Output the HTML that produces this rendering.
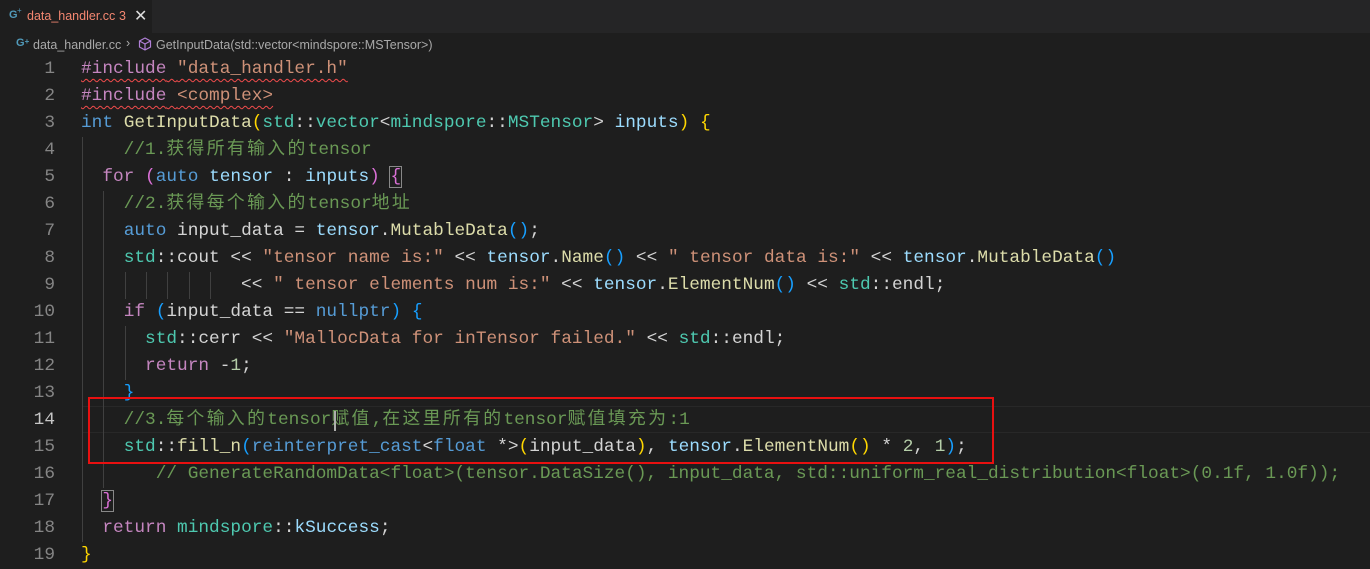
<!DOCTYPE html>
<html><head><meta charset="utf-8"><style>
body{margin:0;width:1370px;height:559px;background:#1e1e1e;overflow:hidden;position:relative;font-family:"Liberation Sans","Noto Sans CJK SC",sans-serif}
.tabs{position:absolute;left:0;top:0;width:1370px;height:33px;background:#252526}
.tab{position:absolute;left:0;top:0;width:152px;height:33px;background:#1e1e1e}
.crumb{position:absolute;left:0;top:33px;height:22px;width:1370px;color:#a9a9a9;font-size:12.5px}
.code{position:absolute;left:0;top:2px;width:1370px;height:559px;font-family:"Liberation Mono","Noto Sans CJK SC",monospace;font-size:17.8px}
.ln{position:absolute;left:0;width:55px;text-align:right;color:#858585;height:27px;line-height:27px}
.l{position:absolute;left:81px;height:27px;line-height:27px;white-space:pre;color:#d4d4d4}
.g{position:absolute;width:1px;background:#404040;height:27px}
.k{color:#c586c0}.s{color:#ce9178}.t{color:#569cd6}.f{color:#dcdcaa}.n{color:#4ec9b0}.v{color:#9cdcfe}.c{color:#6a9955}.y{color:#ffd700}.o{color:#da70d6}.b{color:#179fff}.nu{color:#b5cea8}
.cj{letter-spacing:2.4px}
.sq{text-decoration:underline wavy #f14c4c;text-underline-offset:5px;text-decoration-thickness:1px}
</style></head><body>
<div class="tabs"><div class="tab">
<span style="position:absolute;left:9px;top:9px;color:#519aba;font-size:11px;font-weight:bold">G</span><span style="position:absolute;left:17px;top:6px;color:#519aba;font-size:8px">+</span>
<span style="position:absolute;left:27px;top:9px;color:#f48771;font-size:12.5px">data_handler.cc</span>
<span style="position:absolute;left:119px;top:9px;color:#f48771;font-size:12.5px">3</span>
<span style="position:absolute;left:134px;top:6px;color:#ddd;font-size:16px">✕</span>
</div></div>
<div class="crumb">
<span style="position:absolute;left:16px;top:4px;color:#519aba;font-size:11px;font-weight:bold">G<span style="font-size:8px;vertical-align:top">+</span></span>
<span style="position:absolute;left:33px;top:5px">data_handler.cc</span>
<span style="position:absolute;left:126px;top:3px">›</span>
<svg style="position:absolute;left:138px;top:4px" width="14" height="14" viewBox="0 0 14 14"><path d="M7 1L12.5 4V10L7 13L1.5 10V4Z M1.5 4L7 7L12.5 4 M7 7V13" fill="none" stroke="#b180d7" stroke-width="1.2"/></svg>
<span style="position:absolute;left:156px;top:5px">GetInputData(std::vector&lt;mindspore::MSTensor&gt;)</span>
</div>
<div class="code">
<div style="position:absolute;left:82px;top:404px;width:1288px;height:25px;border:1px solid #282828;border-left:none;border-right:none"></div>
<div class="g" style="left:82px;top:135px;height:405px"></div>
<div class="g" style="left:103px;top:189px;height:216px"></div>
<div class="g" style="left:103px;top:405px;height:81px"></div>
<div class="g" style="left:125px;top:270px"></div><div class="g" style="left:146px;top:270px"></div><div class="g" style="left:167px;top:270px"></div><div class="g" style="left:189px;top:270px"></div><div class="g" style="left:210px;top:270px"></div>
<div class="g" style="left:125px;top:324px;height:54px"></div>

<div class="ln" style="top:54px">1</div><div class="l" style="top:54px"><span class="sq"><span class="k">#include</span> <span class="s">"data_handler.h"</span></span></div>
<div class="ln" style="top:81px">2</div><div class="l" style="top:81px"><span class="sq"><span class="k">#include</span> <span class="s">&lt;complex&gt;</span></span></div>
<div class="ln" style="top:108px">3</div><div class="l" style="top:108px"><span class="t">int</span> <span class="f">GetInputData</span><span class="y">(</span><span class="n">std</span>::<span class="n">vector</span>&lt;<span class="n">mindspore</span>::<span class="n">MSTensor</span>&gt; <span class="v">inputs</span><span class="y">)</span> <span class="y">{</span></div>
<div class="ln" style="top:135px">4</div><div class="l" style="top:135px"><span class="c">    //1.<span class="cj">获得所有输入的</span>tensor</span></div>
<div class="ln" style="top:162px">5</div><div class="l" style="top:162px">  <span class="k">for</span> <span class="o">(</span><span class="t">auto</span> <span class="v">tensor</span> : <span class="v">inputs</span><span class="o">)</span> <span class="o" style="outline:1px solid #888">{</span></div>
<div class="ln" style="top:189px">6</div><div class="l" style="top:189px"><span class="c">    //2.<span class="cj">获得每个输入的</span>tensor<span class="cj">地址</span></span></div>
<div class="ln" style="top:216px">7</div><div class="l" style="top:216px">    <span class="t">auto</span> input_data = <span class="v">tensor</span>.<span class="f">MutableData</span><span class="b">()</span>;</div>
<div class="ln" style="top:243px">8</div><div class="l" style="top:243px">    <span class="n">std</span>::cout &lt;&lt; <span class="s">"tensor name is:"</span> &lt;&lt; <span class="v">tensor</span>.<span class="f">Name</span><span class="b">()</span> &lt;&lt; <span class="s">" tensor data is:"</span> &lt;&lt; <span class="v">tensor</span>.<span class="f">MutableData</span><span class="b">()</span></div>
<div class="ln" style="top:270px">9</div><div class="l" style="top:270px">               &lt;&lt; <span class="s">" tensor elements num is:"</span> &lt;&lt; <span class="v">tensor</span>.<span class="f">ElementNum</span><span class="b">()</span> &lt;&lt; <span class="n">std</span>::endl;</div>
<div class="ln" style="top:297px">10</div><div class="l" style="top:297px">    <span class="k">if</span> <span class="b">(</span>input_data == <span class="t">nullptr</span><span class="b">)</span> <span class="b">{</span></div>
<div class="ln" style="top:324px">11</div><div class="l" style="top:324px">      <span class="n">std</span>::cerr &lt;&lt; <span class="s">"MallocData for inTensor failed."</span> &lt;&lt; <span class="n">std</span>::endl;</div>
<div class="ln" style="top:351px">12</div><div class="l" style="top:351px">      <span class="k">return</span> -<span class="nu">1</span>;</div>
<div class="ln" style="top:378px">13</div><div class="l" style="top:378px">    <span class="b">}</span></div>
<div class="ln" style="top:405px;color:#c6c6c6">14</div><div class="l" style="top:405px"><span class="c">    //3.<span class="cj">每个输入的</span>tensor<span class="cj">赋值</span>,<span class="cj">在这里所有的</span>tensor<span class="cj">赋值填充为</span>:1</span></div>
<div class="ln" style="top:432px">15</div><div class="l" style="top:432px">    <span class="n">std</span>::<span class="f">fill_n</span><span class="b">(</span><span class="t">reinterpret_cast</span>&lt;<span class="t">float</span> *&gt;<span class="y">(</span>input_data<span class="y">)</span>, <span class="v">tensor</span>.<span class="f">ElementNum</span><span class="y">()</span> * <span class="nu">2</span>, <span class="nu">1</span><span class="b">)</span>;</div>
<div class="ln" style="top:459px">16</div><div class="l" style="top:459px"><span class="c">       // GenerateRandomData&lt;float&gt;(tensor.DataSize(), input_data, std::uniform_real_distribution&lt;float&gt;(0.1f, 1.0f));</span></div>
<div class="ln" style="top:486px">17</div><div class="l" style="top:486px">  <span class="o" style="outline:1px solid #888">}</span></div>
<div class="ln" style="top:513px">18</div><div class="l" style="top:513px">  <span class="k">return</span> <span class="n">mindspore</span>::<span class="v">kSuccess</span>;</div>
<div class="ln" style="top:540px">19</div><div class="l" style="top:540px"><span class="y">}</span></div>
<div style="position:absolute;left:334px;top:409px;width:2px;height:20px;background:#aeafad"></div>
</div>
<div style="position:absolute;left:88px;top:397px;width:902px;height:63px;border:2px solid #e81010"></div>
</body></html>
